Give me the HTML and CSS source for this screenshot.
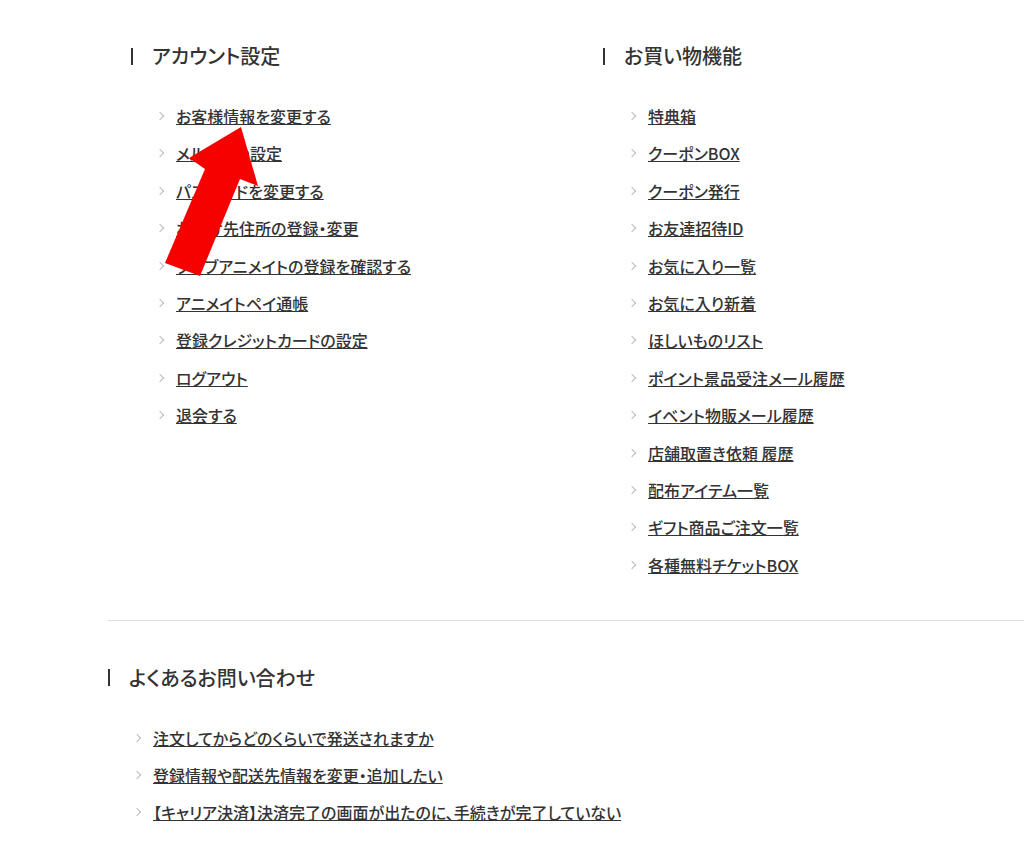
FILE: index.html
```html
<!DOCTYPE html>
<html lang="ja">
<head>
<meta charset="UTF-8">
<title>マイページ</title>
<link rel="stylesheet" href="styles.css">
</head>
<body>

<div class="mypage">
    <div class="menu-cols">
        <!-- Account settings -->
        <section class="menu-block">
            <h2 class="menu-title">アカウント設定</h2>
            <ul class="menu-links">
                <li><a href="#">お客様情報を変更する</a></li>
                <li><a href="#">メルマガの設定</a></li>
                <li><a href="#">パスワードを変更する</a></li>
                <li><a href="#">お届け先住所の登録・変更</a></li>
                <li><a href="#">クラブアニメイトの登録を確認する</a></li>
                <li><a href="#">アニメイトペイ通帳</a></li>
                <li><a href="#">登録クレジットカードの設定</a></li>
                <li><a href="#">ログアウト</a></li>
                <li><a href="#">退会する</a></li>
            </ul>
        </section>

        <!-- Shopping features -->
        <section class="menu-block">
            <h2 class="menu-title">お買い物機能</h2>
            <ul class="menu-links">
                <li><a href="#">特典箱</a></li>
                <li><a href="#">クーポンBOX</a></li>
                <li><a href="#">クーポン発行</a></li>
                <li><a href="#">お友達招待ID</a></li>
                <li><a href="#">お気に入り一覧</a></li>
                <li><a href="#">お気に入り新着</a></li>
                <li><a href="#">ほしいものリスト</a></li>
                <li><a href="#">ポイント景品受注メール履歴</a></li>
                <li><a href="#">イベント物販メール履歴</a></li>
                <li><a href="#">店舗取置き依頼 履歴</a></li>
                <li><a href="#">配布アイテム一覧</a></li>
                <li><a href="#">ギフト商品ご注文一覧</a></li>
                <li><a href="#">各種無料チケットBOX</a></li>
            </ul>
        </section>
    </div>

    <hr class="divider">

    <!-- FAQ -->
    <section class="menu-block">
        <h2 class="menu-title">よくあるお問い合わせ</h2>
        <ul class="menu-links">
            <li><a href="#">注文してからどのくらいで発送されますか</a></li>
            <li><a href="#">登録情報や配送先情報を変更・追加したい</a></li>
            <li><a href="#">【キャリア決済】決済完了の画面が出たのに、手続きが完了していない</a></li>
        </ul>
    </section>
</div>

<!-- red pointer drawn over the first link -->
<svg class="pointer-arrow" width="104" height="160" viewBox="0 0 104 160">
    <polygon points="81,7 98,66 80,59 40,156 5,143 45,49 29,38" fill="#f70000"/>
</svg>

</body>
</html>
```

FILE: styles.css
```css
* {
    box-sizing: border-box;
}

body {
    margin: 0;
    background: #fff;
    color: #333;
    font-family: "Noto Sans CJK JP", "Noto Sans", sans-serif;
    font-feature-settings: "palt";
    position: relative;
}

.mypage {
    padding: 42px 0 40px 108px;
}

.menu-cols {
    display: grid;
    grid-template-columns: 472px 1fr;
    margin-left: 23px;
}

.menu-title {
    display: flex;
    align-items: center;
    gap: 19px;
    margin: 0;
    font-size: 20px;
    font-weight: 500;
    line-height: 28px;
    color: #333;
}

.menu-title::before {
    content: "";
    flex: none;
    width: 2px;
    height: 17px;
    background: #333;
}

.menu-links {
    list-style: none;
    margin: 34px 0 0;
    padding: 0 0 0 26px;
    display: flex;
    flex-direction: column;
    gap: 13.4px;
    font-size: 16px;
    font-weight: 500;
    line-height: 24px;
}

.menu-links li {
    display: flex;
    align-items: center;
    gap: 13px;
}

.menu-links li::before {
    content: "";
    flex: none;
    width: 5px;
    height: 5px;
    border-top: 1px solid #bbb;
    border-right: 1px solid #bbb;
    transform: rotate(45deg);
}

.menu-links a {
    color: #333;
    text-decoration: underline;
}

.divider {
    margin: 43px 0 43px;
    border: none;
    border-top: 1px solid #ddd;
}

.pointer-arrow {
    position: absolute;
    left: 160px;
    top: 120px;
    pointer-events: none;
}
```
